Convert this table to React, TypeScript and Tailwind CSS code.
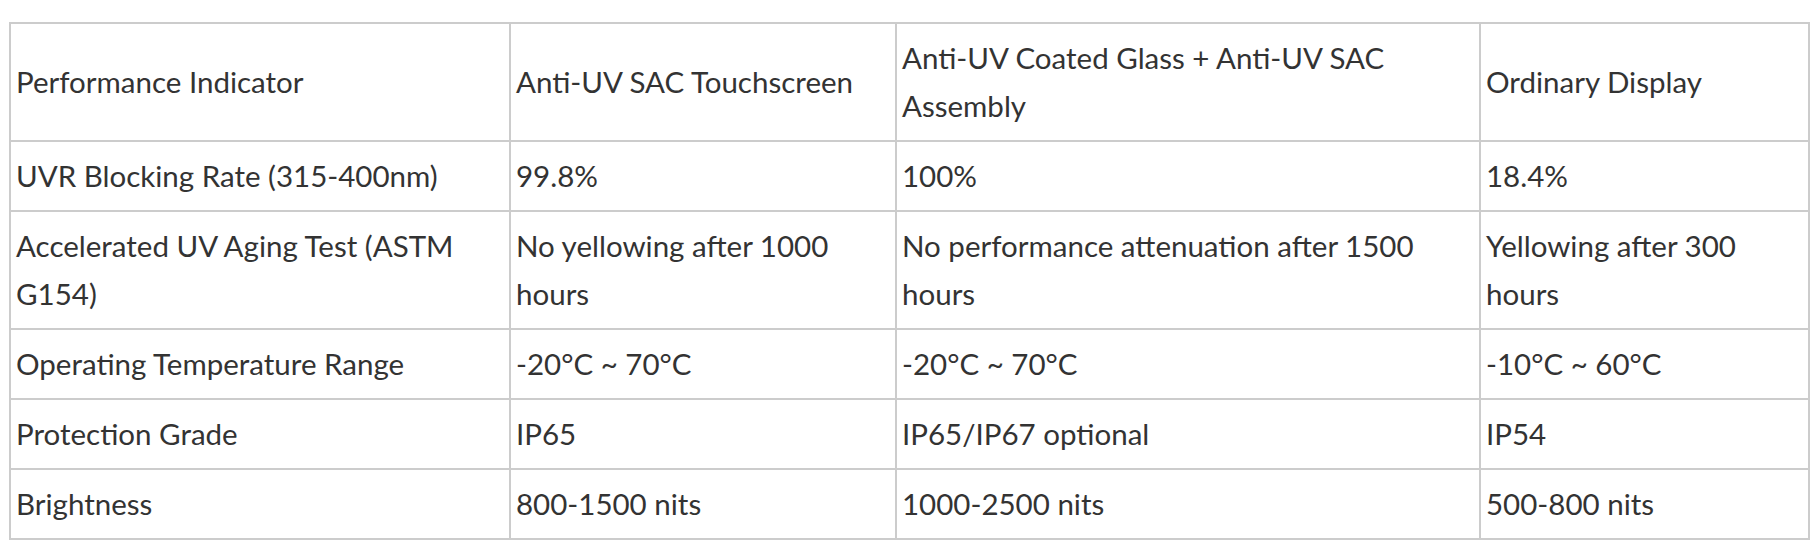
const header = [
  'Performance Indicator',
  'Anti-UV SAC Touchscreen',
  'Anti-UV Coated Glass + Anti-UV SAC Assembly',
  'Ordinary Display'
];

const rows: string[][] = [
  ['UVR Blocking Rate (315-400nm)', '99.8%', '100%', '18.4%'],
  [
    'Accelerated UV Aging Test (ASTM G154)',
    'No yellowing after 1000 hours',
    'No performance attenuation after 1500 hours',
    'Yellowing after 300 hours'
  ],
  ['Operating Temperature Range', '-20°C ~ 70°C', '-20°C ~ 70°C', '-10°C ~ 60°C'],
  ['Protection Grade', 'IP65', 'IP65/IP67 optional', 'IP54'],
  ['Brightness', '800-1500 nits', '1000-2500 nits', '500-800 nits']
];

function Cell({ text }: { text: string }) {
  return (
    <td className="border-2 border-[#cccccc] px-[5px] py-[10px] align-middle">
      {text}
    </td>
  );
}

function App() {
  return (
    <div className="bg-white w-[1818px] h-[552px] pt-[22px] pl-[9px] font-['Lato','Liberation_Sans',sans-serif] text-[#333333] text-[29.5px] leading-[48px]">
      <table className="table-fixed border-collapse w-[1799px]">
        <colgroup>
          <col className="w-[500px]" />
          <col className="w-[386px]" />
          <col className="w-[584px]" />
          <col className="w-[329px]" />
        </colgroup>
        <tbody>
          <tr>
            {header.map((h) => (
              <Cell key={h} text={h} />
            ))}
          </tr>
          {rows.map((row) => (
            <tr key={row[0]}>
              {row.map((c, i) => (
                <Cell key={i} text={c} />
              ))}
            </tr>
          ))}
        </tbody>
      </table>
    </div>
  );
}

export default App;
